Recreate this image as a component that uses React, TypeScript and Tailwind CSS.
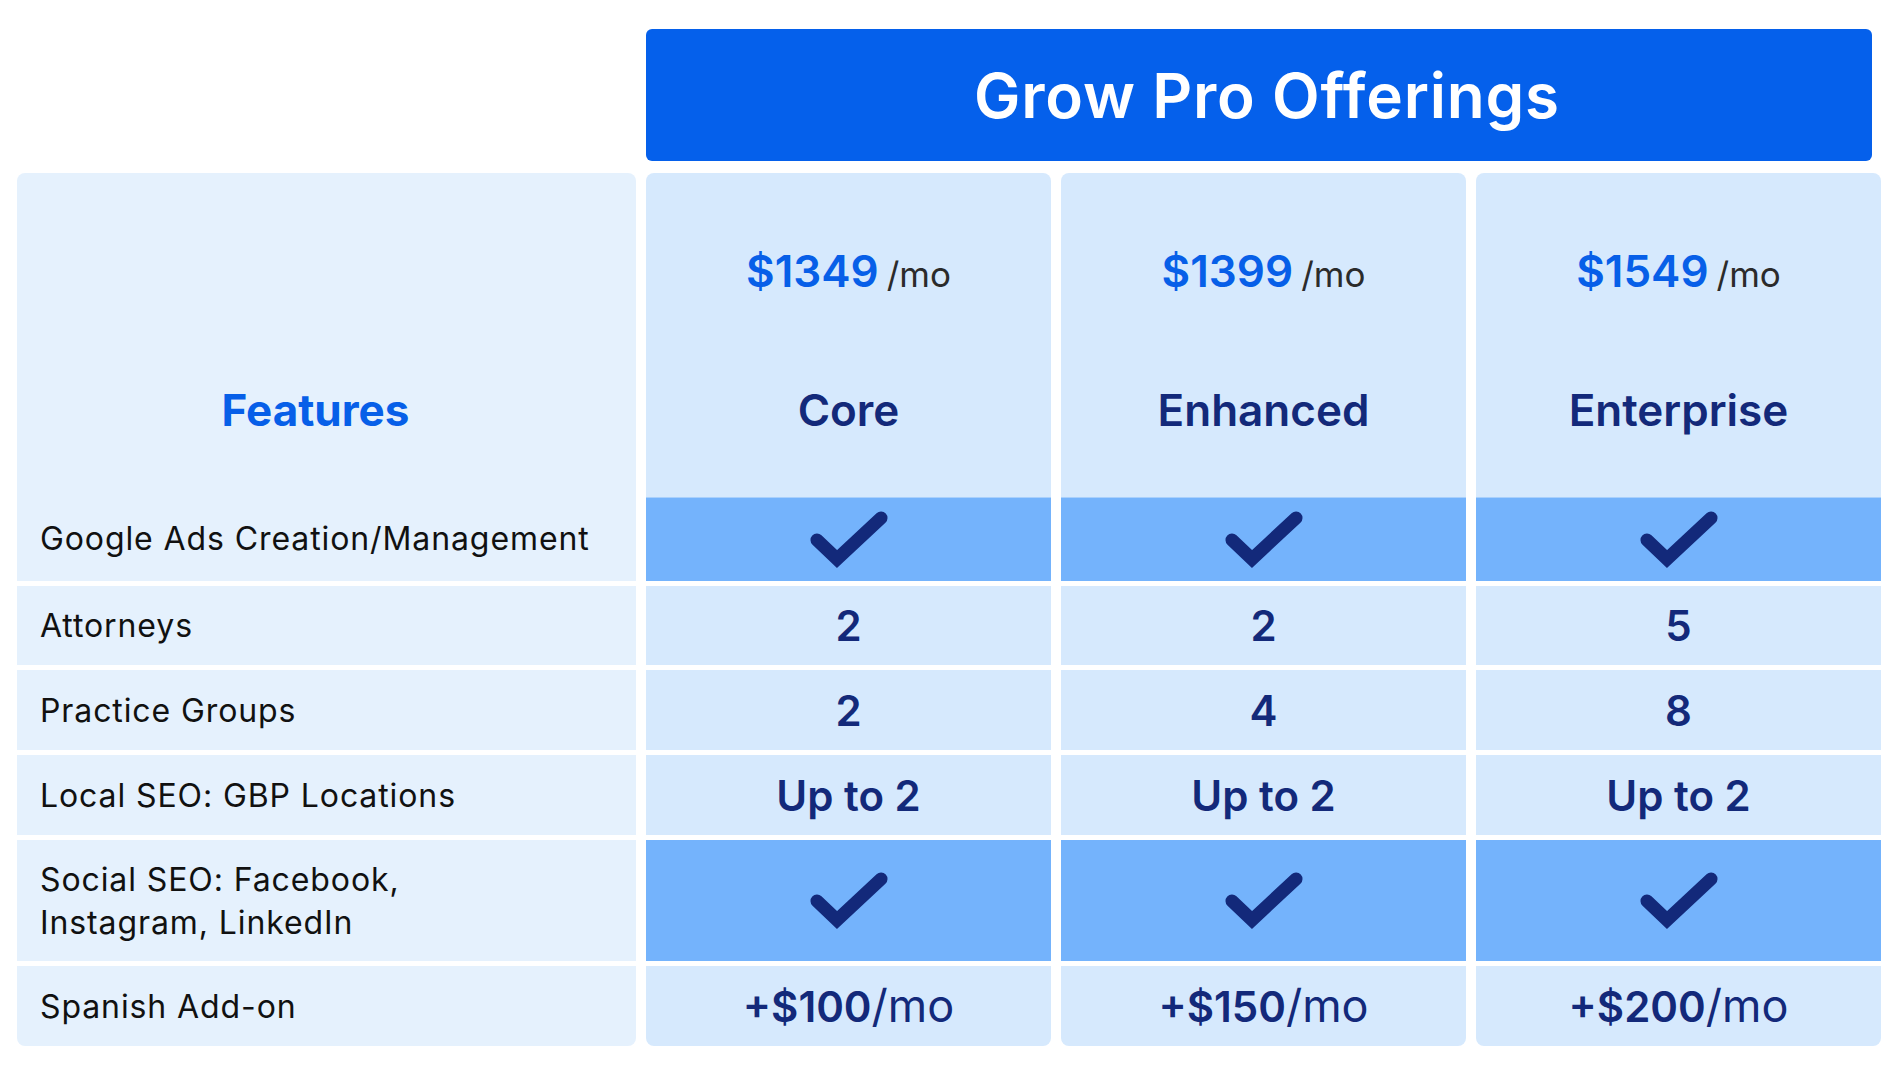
import type { ReactNode } from 'react'

type Plan = {
  name: string
  price: string
  attorneys: string
  groups: string
  locations: string
  spanish: string
}

const plans: Plan[] = [
  { name: 'Core', price: '$1349', attorneys: '2', groups: '2', locations: 'Up to 2', spanish: '+$100' },
  { name: 'Enhanced', price: '$1399', attorneys: '2', groups: '4', locations: 'Up to 2', spanish: '+$150' },
  { name: 'Enterprise', price: '$1549', attorneys: '5', groups: '8', locations: 'Up to 2', spanish: '+$200' },
]

function Check() {
  return (
    <svg width="78" height="58" viewBox="-7 -7 78 58" aria-hidden="true">
      <path
        d="M0 22 L20 41 L64 0"
        fill="none"
        stroke="#13297A"
        strokeWidth="13"
        strokeLinecap="round"
        strokeLinejoin="miter"
      />
    </svg>
  )
}

function LabelCell({ children, className = '' }: { children: ReactNode; className?: string }) {
  return (
    <div className={`flex items-center bg-[#E5F1FD] pl-[23px] text-[32px] leading-[43px] tracking-[0.9px] text-[#111111] ${className}`}>
      <div>{children}</div>
    </div>
  )
}

function ValueCell({ children, className = '' }: { children: ReactNode; className?: string }) {
  return (
    <div className={`flex items-center justify-center bg-[#D6E9FD] text-[42px] font-semibold text-[#13297A] ${className}`}>
      {children}
    </div>
  )
}

function CheckCell({ className = '' }: { className?: string }) {
  return (
    <div className={`flex items-center justify-center bg-[#74B3FC] ${className}`}>
      <Check />
    </div>
  )
}

export default function App() {
  return (
    <div className="min-h-screen bg-white pl-[17px] pt-[29px] font-['Inter','Noto_Sans',sans-serif]">
      <div className="grid grid-cols-[619px_405px_405px_405px] gap-x-[10px]">
        <div />
        <div className="col-span-3 flex h-[132px] w-[1226px] items-center justify-center rounded-md bg-[#0560EB]">
          <h1 className="pl-[16px] text-[62px] font-semibold tracking-[0.8px] text-white">Grow Pro Offerings</h1>
        </div>
      </div>

      <div className="mt-[12px] grid grid-cols-[619px_405px_405px_405px] gap-x-[10px] gap-y-[5px]">
        {/* header + google ads row */}
        <div className="flex h-[408px] flex-col rounded-t-lg bg-[#E5F1FD]">
          <div className="h-[324px] pr-[22px] pt-[212px] text-center text-[44px] font-bold leading-[50px] text-[#075FE8]">
            Features
          </div>
          <div className="flex h-[84px] items-center pl-[23px] text-[32px] tracking-[0.9px] text-[#111111]">
            Google Ads Creation/Management
          </div>
        </div>
        {plans.map((plan) => (
          <div key={plan.name} className="flex h-[408px] flex-col overflow-hidden rounded-t-lg bg-[#D6E9FD]">
            <div className="h-[324px] pt-[65px] text-center">
              <div className="flex h-[50px] items-baseline justify-center gap-[8px]">
                <span className="text-[44px] font-semibold text-[#075FE8]">{plan.price}</span>
                <span className="text-[35px] text-[#2B2B2B]">/mo</span>
              </div>
              <div className="mt-[97px] h-[50px] text-[44px] font-semibold leading-[50px] text-[#13297A]">
                {plan.name}
              </div>
            </div>
            <CheckCell className="h-[84px] border-t border-[#A9D0FC]" />
          </div>
        ))}

        <LabelCell className="h-[79px]">Attorneys</LabelCell>
        {plans.map((plan) => (
          <ValueCell key={plan.name}>{plan.attorneys}</ValueCell>
        ))}

        <LabelCell className="h-[80px]">Practice Groups</LabelCell>
        {plans.map((plan) => (
          <ValueCell key={plan.name}>{plan.groups}</ValueCell>
        ))}

        <LabelCell className="h-[80px]">Local SEO: GBP Locations</LabelCell>
        {plans.map((plan) => (
          <ValueCell key={plan.name}>{plan.locations}</ValueCell>
        ))}

        <LabelCell className="h-[121px]">
          Social SEO: Facebook,
          <br />
          Instagram, LinkedIn
        </LabelCell>
        {plans.map((plan) => (
          <CheckCell key={plan.name} />
        ))}

        <LabelCell className="h-[80px] rounded-b-lg">Spanish Add-on</LabelCell>
        {plans.map((plan) => (
          <ValueCell key={plan.name} className="rounded-b-lg">
            <span>{plan.spanish}</span>
            <span className="text-[45px] font-normal">/mo</span>
          </ValueCell>
        ))}
      </div>
    </div>
  )
}
